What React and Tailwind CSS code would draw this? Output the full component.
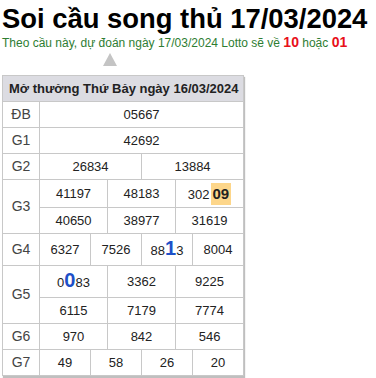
import React from "react";

const B = ({ children }) => (
  <span className="text-[20px] font-bold text-[#1e50c8] leading-none">{children}</span>
);

function Cell({ children, span }) {
  return (
    <td colSpan={span} className="border border-[#c8c8c8] text-center p-0 text-[13px] text-[#222]">
      {children}
    </td>
  );
}

function Label({ children, rows }) {
  return (
    <td rowSpan={rows} className="border border-[#c8c8c8] text-center p-0 text-[14px] text-[#444]">
      {children}
    </td>
  );
}

export default function App() {
  return (
    <div className="w-[376px] h-[378px] bg-white overflow-hidden" style={{ fontFamily: '"Liberation Sans", Arial, sans-serif' }}>
      <h1 className="pl-[2px] pt-[4px] text-[27.4px] font-bold leading-[30px] text-black whitespace-nowrap">
        Soi cầu song thủ 17/03/2024
      </h1>
      <p className="pl-[2px] h-[16px] text-[12px] leading-[16px] text-[#2e7d32] whitespace-nowrap">
        Theo cầu này, dự đoán ngày 17/03/2024 Lotto sẽ về{" "}
        <span className="text-[14px] leading-[16px] font-bold text-[#e8101a]">10</span> hoặc{" "}
        <span className="text-[14px] leading-[16px] font-bold text-[#e8101a]">01</span>
      </p>
      <div className="relative h-[25px]">
        <div className="absolute left-[103px] top-[3px] w-0 h-0 border-l-[7px] border-r-[7px] border-b-[13px] border-l-transparent border-r-transparent border-b-[#c4c4c4]" />
      </div>
      <div className="ml-[2px] w-[242px] shadow-[1px_2px_1px_rgba(0,0,0,0.25)]">
        <table className="w-[242px] table-fixed border-collapse">
          <colgroup>
            <col style={{ width: 37 }} />
            {Array.from({ length: 12 }).map((_, i) => (
              <col key={i} style={{ width: 17 }} />
            ))}
          </colgroup>
          <tbody>
            <tr>
              <td colSpan={13} className="border border-[#c8c8c8] bg-[#dcdce2] h-[26px] pl-[6px] text-[13px] font-bold text-[#222]">
                Mở thưởng Thứ Bảy ngày 16/03/2024
              </td>
            </tr>
            <tr className="h-[26px]">
              <Label>ĐB</Label>
              <Cell span={12}>05667</Cell>
            </tr>
            <tr className="h-[26px]">
              <Label>G1</Label>
              <Cell span={12}>42692</Cell>
            </tr>
            <tr className="h-[26px]">
              <Label>G2</Label>
              <Cell span={6}>26834</Cell>
              <Cell span={6}>13884</Cell>
            </tr>
            <tr className="h-[28px]">
              <Label rows={2}>G3</Label>
              <Cell span={4}>41197</Cell>
              <Cell span={4}>48183</Cell>
              <Cell span={4}>
                302<span className="inline-block bg-[#fdd68a] px-[2px] py-[3px] font-bold text-[15px] leading-[16px] ml-[1px]">09</span>
              </Cell>
            </tr>
            <tr className="h-[26px]">
              <Cell span={4}>40650</Cell>
              <Cell span={4}>38977</Cell>
              <Cell span={4}>31619</Cell>
            </tr>
            <tr className="h-[32px]">
              <Label>G4</Label>
              <Cell span={3}>6327</Cell>
              <Cell span={3}>7526</Cell>
              <Cell span={3}>88<B>1</B>3</Cell>
              <Cell span={3}>8004</Cell>
            </tr>
            <tr className="h-[32px]">
              <Label rows={2}>G5</Label>
              <Cell span={4}>0<B>0</B>83</Cell>
              <Cell span={4}>3362</Cell>
              <Cell span={4}>9225</Cell>
            </tr>
            <tr className="h-[26px]">
              <Cell span={4}>6115</Cell>
              <Cell span={4}>7179</Cell>
              <Cell span={4}>7774</Cell>
            </tr>
            <tr className="h-[26px]">
              <Label>G6</Label>
              <Cell span={4}>970</Cell>
              <Cell span={4}>842</Cell>
              <Cell span={4}>546</Cell>
            </tr>
            <tr className="h-[26px]">
              <Label>G7</Label>
              <Cell span={3}>49</Cell>
              <Cell span={3}>58</Cell>
              <Cell span={3}>26</Cell>
              <Cell span={3}>20</Cell>
            </tr>
          </tbody>
        </table>
      </div>
    </div>
  );
}
